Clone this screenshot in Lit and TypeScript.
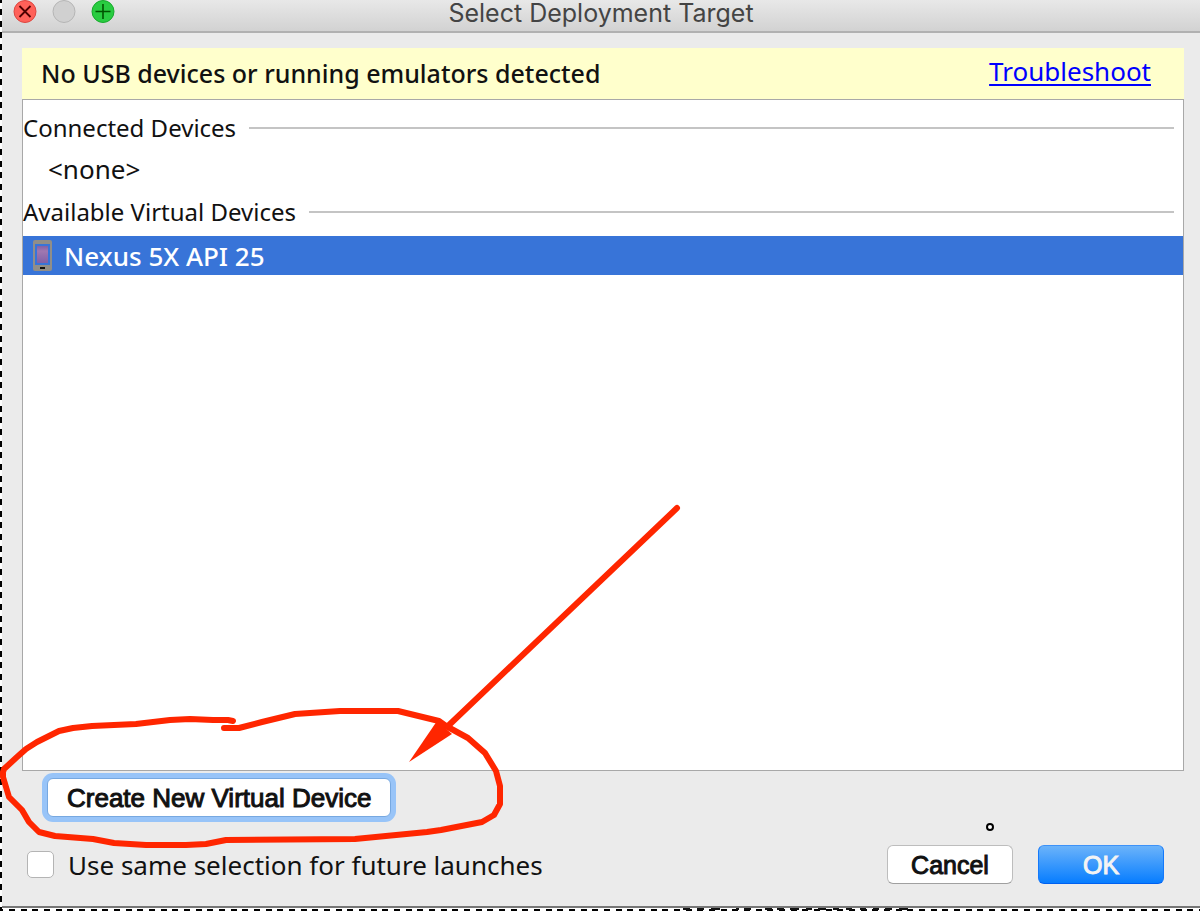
import { LitElement, html, css } from "lit";
import { customElement, state } from "lit/decorators.js";

@customElement("annotation-marks")
class AnnotationMarks extends LitElement {
  static styles = css`
    :host {
      position: absolute;
      inset: 0;
      overflow: hidden;
      pointer-events: none;
    }
    .marks {
      position: absolute;
      left: 0;
      bottom: 0;
      display: block;
    }
  `;

  render() {
    return html`
      <svg class="marks" width="1200" height="911" viewBox="0 0 1200 911" aria-hidden="true">
        <g fill="none" stroke="#ff2600" stroke-width="6" stroke-linecap="round" stroke-linejoin="round">
          <path d="M233 721L228 720L213 720L190 719L170 720L136 724L92 726L73 728L59 731L37 742L26 749L17 757L4 769L3 772L3 777L9 797L22 810L29 822L39 832L55 836L93 839L114 843L146 845L186 845L206 844L226 840L355 839L427 832L441 830L482 822L494 815L500 804L500 786L496 771L485 753L468 738L446 726L439 721L398 711L374 711H340L295 714L262 722L239 728H224" />
          <path d="M677 508L448 726" />
        </g>
        <path d="M437 721L452 734L409 762Z" fill="#ff2600" />
        <circle cx="990" cy="827" r="3" fill="#fff" stroke="#000" stroke-width="2" />
        <path d="M683 909H690M697 909H704M711 909H720M736 909H739M744 909H751M765 909H772M777 909H784M790 909H799M806 909H812M818 909H826M833 909H839M846 909H852M860 909H866M873 909H879M885 909H892M899 909H908" fill="none" stroke="#111" stroke-width="2" />
      </svg>
    `;
  }
}

@customElement("app-root")
export class AppRoot extends LitElement {
  @state() private remember = false;

  static styles = css`
    :host {
      display: block;
      position: relative;
      font-family: "Noto Sans", sans-serif;
      font-size: 26px;
      line-height: 36px;
      color: #111;
    }
    * {
      box-sizing: border-box;
    }
    .desktop {
      min-height: 100vh;
      display: flex;
      padding: 0 0 3px 2px;
      background:
        repeating-linear-gradient(to bottom, #000 0 3px, #fff 3px 9px, #000 9px 15px, #fff 15px 21px, #000 21px 27px, #fff 27px 32px, #000 32px 35px) left top / 2px 100% no-repeat,
        repeating-linear-gradient(to right, #000 0 3px, #fff 3px 9px, #000 9px 15px, #fff 15px 21px, #000 21px 27px, #fff 27px 32px, #000 32px 35px) left bottom / 100% 2px no-repeat,
        #fff;
    }
    .dialog {
      flex: 1;
      min-width: 0;
      display: flex;
      flex-direction: column;
      background: #ebebeb;
      border-bottom: 2px solid #777;
    }
    .titlebar {
      display: grid;
      grid-template-columns: 1fr auto 1fr;
      height: 33px;
      padding: 0 11px;
      background: linear-gradient(#e8e8e8, #d2d2d2);
      border-bottom: 2px solid #b1b1b1;
    }
    .lights {
      display: flex;
      gap: 15px;
    }
    .light {
      width: 24px;
      height: 24px;
      padding: 0;
      border: 0;
      background: none;
    }
    .light svg {
      display: block;
    }
    .title {
      margin: 0;
      font-family: Inter, sans-serif;
      font-size: 25px;
      line-height: 27px;
      font-weight: 400;
      color: #444;
    }
    .content {
      flex: 1;
      display: flex;
      flex-direction: column;
      padding: 15px 16px 0 20px;
    }
    .banner {
      display: flex;
      justify-content: space-between;
      align-items: flex-start;
      height: 51px;
      padding: 7px 33px 0 19px;
      background: #ffffcc;
    }
    .notice {
      font-size: 25px;
      font-weight: 500;
    }
    .banner a {
      line-height: 32px;
      color: #00f;
      text-decoration-thickness: 2px;
      text-underline-offset: 3px;
    }
    .list {
      flex: 1;
      padding-top: 8px;
      background: #fff;
      border: 1px solid #a8a8a8;
    }
    .heading {
      display: flex;
      align-items: center;
      gap: 13px;
      height: 40px;
      margin: 0;
      padding-right: 9px;
      font-size: 24px;
      font-weight: 400;
    }
    .heading::after {
      content: "";
      flex: 1;
      height: 2px;
      background: #c4c4c4;
    }
    .none {
      margin: 0;
      padding: 3px 25px 5px;
    }
    .device {
      display: flex;
      align-items: center;
      gap: 12px;
      width: 100%;
      height: 39px;
      margin-top: 4px;
      padding: 0 10px;
      border: 0;
      background: #3874d8;
      color: #fff;
      font: inherit;
      font-weight: 500;
    }
    .create-row {
      padding: 7px 25px 0;
    }
    .btn {
      height: 39px;
      padding: 0;
      border: 1px solid #bdbdbd;
      border-bottom-color: #a0a0a0;
      border-radius: 6px;
      background: #fff;
      color: #111;
      font-family: "Liberation Sans", sans-serif;
      font-size: 25px;
      line-height: 36px;
      -webkit-text-stroke: 1px currentColor;
    }
    .create {
      display: block;
      padding: 0 19px;
      border-color: #77a8e0;
      box-shadow: 0 0 0 5px #98c4f8;
      font-size: 26px;
    }
    .footer {
      display: flex;
      justify-content: space-between;
      align-items: center;
      padding: 28px 20px 22px 5px;
    }
    .remember {
      display: flex;
      align-items: center;
      gap: 14px;
    }
    .remember input {
      appearance: none;
      width: 27px;
      height: 27px;
      margin: 0;
      background: #fff;
      border: 1px solid #b4b4b4;
      border-radius: 5px;
    }
    .remember input:checked {
      background: #3874d8;
    }
    .actions {
      display: flex;
      gap: 25px;
    }
    .actions .btn {
      width: 126px;
    }
    .actions .ok {
      border-color: #3d92f8 #1479fb #0060f0;
      background: linear-gradient(#6bb3fa, #077dff);
      color: #f4f4f4;
    }
  `;

  render() {
    return html`
      <div class="desktop">
        <main class="dialog">
          <header class="titlebar">
            <div class="lights">
              <button class="light" aria-label="Close">
                <svg width="24" height="24" viewBox="0 0 24 24">
                  <circle cx="12" cy="11.5" r="11" fill="#ff6159" stroke="#dc4640" />
                  <path d="M6.5 6L17.5 17M17.5 6L6.5 17" stroke="#4d0000" stroke-width="1.8" />
                </svg>
              </button>
              <button class="light" aria-label="Minimize" disabled>
                <svg width="24" height="24" viewBox="0 0 24 24">
                  <circle cx="12" cy="11.5" r="11" fill="#d0d0d0" stroke="#b5b5b5" />
                </svg>
              </button>
              <button class="light" aria-label="Zoom">
                <svg width="24" height="24" viewBox="0 0 24 24">
                  <circle cx="12" cy="11.5" r="11" fill="#29cc41" stroke="#17a92c" />
                  <path d="M12 4V19M4.5 11.5H19.5" stroke="#005500" stroke-width="1.6" />
                </svg>
              </button>
            </div>
            <h1 class="title">Select Deployment Target</h1>
          </header>
          <div class="content">
            <div class="banner">
              <span class="notice">No USB devices or running emulators detected</span>
              <a href="#troubleshoot">Troubleshoot</a>
            </div>
            <section class="list">
              <h2 class="heading">Connected Devices</h2>
              <p class="none">&lt;none&gt;</p>
              <h2 class="heading">Available Virtual Devices</h2>
              <button class="device" aria-pressed="true">
                <svg width="19" height="31" viewBox="0 0 19 31" aria-hidden="true">
                  <defs>
                    <linearGradient id="screen" x1="0" y1="0" x2="0" y2="1">
                      <stop offset="0" stop-color="#8060a8" />
                      <stop offset=".3" stop-color="#a078b0" />
                      <stop offset="1" stop-color="#8060a8" />
                    </linearGradient>
                  </defs>
                  <rect width="19" height="31" rx="2" fill="#918e88" />
                  <rect x="2" y="4" width="15" height="21" fill="#3874d8" />
                  <rect x="4" y="6" width="11" height="17" fill="url(#screen)" />
                  <rect x="7" y="27" width="5" height="2" fill="#111" />
                </svg>
                <span>Nexus 5X API 25</span>
              </button>
            </section>
            <div class="create-row">
              <button class="btn create">Create New Virtual Device</button>
            </div>
            <footer class="footer">
              <label class="remember">
                <input
                  type="checkbox"
                  .checked=${this.remember}
                  @change=${(e: Event) => (this.remember = (e.target as HTMLInputElement).checked)}
                />
                <span>Use same selection for future launches</span>
              </label>
              <div class="actions">
                <button class="btn">Cancel</button>
                <button class="btn ok">OK</button>
              </div>
            </footer>
          </div>
        </main>
      </div>
      <annotation-marks></annotation-marks>
    `;
  }
}
